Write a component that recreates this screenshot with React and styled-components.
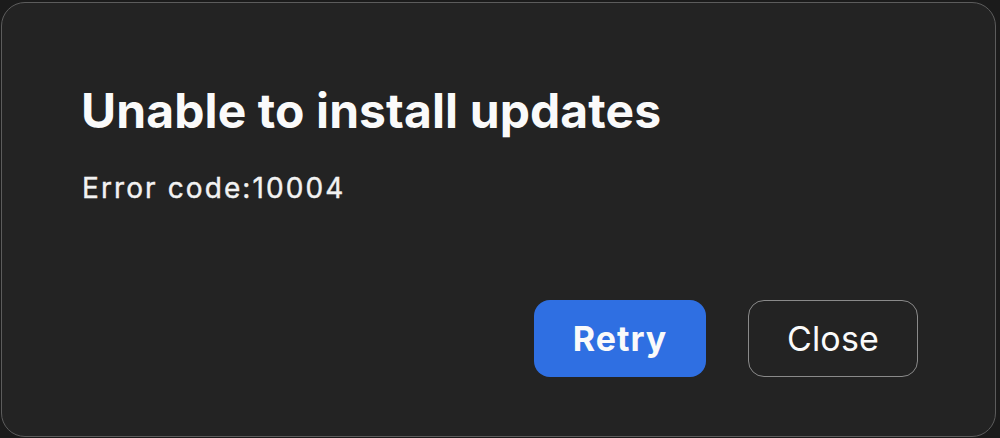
import styled, { createGlobalStyle } from "styled-components";

const GlobalStyle = createGlobalStyle`
  html, body {
    margin: 0;
    padding: 0;
    background: #1b1b1b;
    font-family: Inter, "Liberation Sans", sans-serif;
  }
`;

const Page = styled.div`
  width: 1000px;
  height: 438px;
  padding: 2px 4px 1px 1px;
  box-sizing: border-box;
`;

const Dialog = styled.div`
  height: 100%;
  box-sizing: border-box;
  background: #232323;
  border: 1px solid #5c5c5c;
  border-radius: 24px;
  display: flex;
  flex-direction: column;
  padding: 80px 77px 59px 80px;
`;

const Title = styled.h1`
  margin: 0 0 0 -1px;
  color: #fafafa;
  font-size: 48px;
  font-weight: 700;
  line-height: 56px;
  letter-spacing: 0.1px;
`;

const Message = styled.p`
  margin: 33px 0 0;
  color: #f2f2f2;
  font-size: 28px;
  font-weight: 400;
  line-height: 32px;
  letter-spacing: 2.1px;
  -webkit-text-stroke: 0.4px #f2f2f2;
`;

const Actions = styled.div`
  margin-top: auto;
  display: flex;
  justify-content: flex-end;
  gap: 42px;
`;

const Button = styled.button`
  width: ${({ $primary }) => ($primary ? "172px" : "170px")};
  height: 77px;
  box-sizing: border-box;
  border-radius: 16px;
  font-family: inherit;
  font-size: 34px;
  font-weight: ${({ $primary }) => ($primary ? 700 : 400)};
  letter-spacing: ${({ $primary }) => ($primary ? "1px" : "0.2px")};
  color: #fafafa;
  background: ${({ $primary }) => ($primary ? "#2f6fe2" : "transparent")};
  border: ${({ $primary }) => ($primary ? "none" : "1.5px solid #8a8a8a")};
  cursor: pointer;
`;

export default function App() {
  return (
    <>
      <GlobalStyle />
      <Page>
        <Dialog>
          <Title>Unable to install updates</Title>
          <Message>Error code:10004</Message>
          <Actions>
            <Button $primary>Retry</Button>
            <Button>Close</Button>
          </Actions>
        </Dialog>
      </Page>
    </>
  );
}
